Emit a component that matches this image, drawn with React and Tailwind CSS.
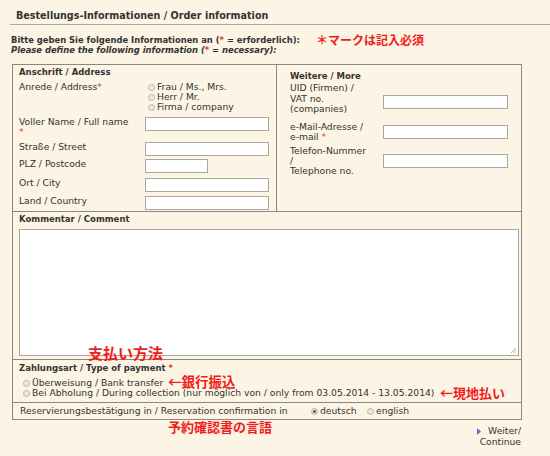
function Radio({ checked }) {
  return (
    <span className="inline-flex w-[7px] h-[7px] rounded-full border border-[#b9b4ad] bg-[#ebe8e3] items-center justify-center shrink-0">
      {checked && <span className="w-[3px] h-[3px] rounded-full bg-[#555]" />}
    </span>
  );
}

function Field({ w = 'w-[125px]' }) {
  return <div className={`${w} h-[14px] bg-white border border-[#aaa6a0] shrink-0`} />;
}

function Star() {
  return <span className="text-[#e2362e]">*</span>;
}

export default function App() {
  return (
    <div className="relative w-[550px] h-[456px] bg-[#fcf4e4] text-[#333] font-['DejaVu_Sans',Verdana,sans-serif] text-[9.2px] leading-[10px] overflow-hidden">
      {/* title */}
      <div className="pl-4 pt-[10px] h-[24px] text-[9.6px] font-bold leading-[11px]">
        Bestellungs-Informationen / Order information
      </div>
      <div className="ml-[10px] border-t border-[#aca69f]" />

      <div className="pl-[11px] pt-[10px] h-[39px] font-bold text-[8.4px]">
        <div>Bitte geben Sie folgende Informationen an (<Star /> = erforderlich):</div>
        <div className="italic">Please define the following information (<Star /> = necessary):</div>
      </div>

      {/* form box */}
      <div className="ml-[12px] w-[510px] border border-[#8c8782]">
        <div className="flex h-[147px] border-b border-[#8c8782]">
          {/* Anschrift */}
          <div className="w-[264px] border-r border-[#8c8782] pl-[6px] pt-[2px]">
            <div className="font-bold text-[8.5px]">Anschrift / Address</div>
            <div className="flex mt-[5px]">
              <div className="w-[126px]">Anrede / Address<Star /></div>
              <div className="pl-[3px]">
                {['Frau / Ms., Mrs.', 'Herr / Mr.', 'Firma / company'].map((t) => (
                  <div key={t} className="flex items-center gap-[2px]">
                    <Radio />
                    <span>{t}</span>
                  </div>
                ))}
              </div>
            </div>
            <div className="flex mt-[5px] h-[20px]">
              <div className="w-[126px]">
                Voller Name / Full name
                <br />
                <Star />
              </div>
              <Field w="w-[124px]" />
            </div>
            <div className="flex mt-[5px]">
              <div className="w-[126px]">Straße / Street</div>
              <Field w="w-[124px]" />
            </div>
            <div className="flex mt-[3px]">
              <div className="w-[126px]">PLZ / Postcode</div>
              <Field w="w-[63px]" />
            </div>
            <div className="flex mt-[5px]">
              <div className="w-[126px]">Ort / City</div>
              <Field w="w-[124px]" />
            </div>
            <div className="flex mt-[4px]">
              <div className="w-[126px]">Land / Country</div>
              <Field w="w-[124px]" />
            </div>
          </div>

          {/* Weitere */}
          <div className="flex-1 pl-[13px] pt-[6px]">
            <div className="font-bold text-[8.5px]">Weitere / More</div>
            <div className="flex mt-[2px] leading-[10.5px]">
              <div className="w-[93px]">
                UID (Firmen) /<br />VAT no.<br />(companies)
              </div>
              <div className="mt-[12px]">
                <Field />
              </div>
            </div>
            <div className="flex mt-[7px] leading-[10px]">
              <div className="w-[93px]">
                e-Mail-Adresse /<br />e-mail <Star />
              </div>
              <div className="mt-[3px]">
                <Field />
              </div>
            </div>
            <div className="flex mt-[4px] leading-[10px]">
              <div className="w-[93px]">
                Telefon-Nummer<br />/<br />Telephone no.
              </div>
              <div className="mt-[8px]">
                <Field />
              </div>
            </div>
          </div>
        </div>

        {/* Kommentar */}
        <div className="pl-[6px] pt-[2px] pb-[3px] border-b border-[#8c8782]">
          <div className="font-bold text-[8.5px]">Kommentar / Comment</div>
          <div className="relative mt-[5px] w-[500px] h-[127px] bg-white border border-[#aaa6a0]">
            <svg className="absolute right-[1px] bottom-[1px]" width="7" height="7" viewBox="0 0 7 7">
              <path d="M6 1 L1 6 M6 3.5 L3.5 6" stroke="#999" strokeWidth="0.8" />
            </svg>
          </div>
        </div>

        {/* Zahlungsart */}
        <div className="pl-[6px] pt-[3px] pb-[4px] border-b border-[#8c8782]">
          <div className="font-bold text-[8.5px]">
            Zahlungsart / Type of payment <Star />
          </div>
          <div className="mt-[5px] ml-[4px]">
            <div className="flex items-center gap-[2px]">
              <Radio />
              <span>Überweisung / Bank transfer</span>
            </div>
            <div className="flex items-center gap-[2px]">
              <Radio />
              <span>Bei Abholung / During collection (nur möglich von / only from 03.05.2014 - 13.05.2014)</span>
            </div>
          </div>
        </div>

        {/* Reservierung */}
        <div className="flex items-center pl-[7px] pt-[3px] pb-[3px]">
          <span className="w-[291px]">Reservierungsbestätigung in / Reservation confirmation in</span>
          <span className="flex items-center gap-[2px] w-[56px]">
            <Radio checked />
            deutsch
          </span>
          <span className="flex items-center gap-[2px]">
            <Radio />
            english
          </span>
        </div>
      </div>

      {/* Weiter */}
      <div className="ml-[12px] w-[510px] flex justify-end pt-[5px] pr-[1px]">
        <div className="text-right leading-[11px]">
          <svg className="inline-block mr-[7px] align-[-1px]" width="4" height="7" viewBox="0 0 4 7">
            <path d="M0 0 L4 3.5 L0 7 Z" fill="#5876b8" />
          </svg>
          Weiter/
          <br />
          Continue
        </div>
      </div>

      {/* annotations */}
      <div className="absolute left-[316px] top-[34px] text-[12px] leading-none font-bold text-[#f21b1b] font-['Noto_Sans_CJK_JP',sans-serif]">
        ＊マークは記入必須
      </div>
      <div className="absolute left-[88px] top-[345px] text-[15px] leading-none font-bold text-[#f21b1b] font-['Noto_Sans_CJK_JP',sans-serif]">
        支払い方法
      </div>
      <div className="absolute left-[168px] top-[375px] text-[13.5px] leading-[12px] font-bold text-[#f21b1b] font-['Noto_Sans_CJK_JP',sans-serif]">
        ←銀行振込
      </div>
      <div className="absolute left-[440px] top-[387px] text-[13px] leading-[12px] font-bold text-[#f21b1b] font-['Noto_Sans_CJK_JP',sans-serif]">
        ←現地払い
      </div>
      <div className="absolute left-[168px] top-[420px] text-[13px] leading-none font-bold text-[#f21b1b] font-['Noto_Sans_CJK_JP',sans-serif]">
        予約確認書の言語
      </div>
    </div>
  );
}
